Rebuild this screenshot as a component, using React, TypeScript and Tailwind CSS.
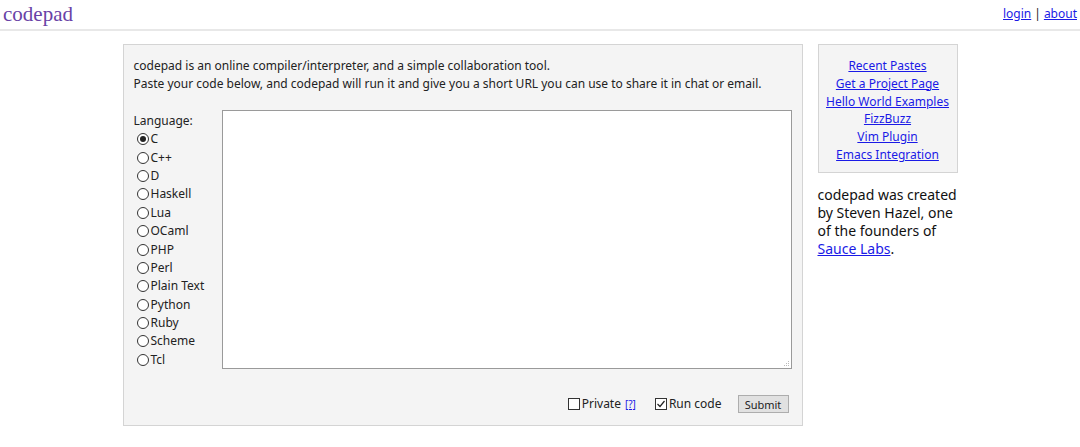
import React, { useState } from 'react';

const languages = [
  'C',
  'C++',
  'D',
  'Haskell',
  'Lua',
  'OCaml',
  'PHP',
  'Perl',
  'Plain Text',
  'Python',
  'Ruby',
  'Scheme',
  'Tcl',
];

const sideLinks = [
  'Recent Pastes',
  'Get a Project Page',
  'Hello World Examples',
  'FizzBuzz',
  'Vim Plugin',
  'Emacs Integration',
];

const Radio: React.FC<{ checked: boolean }> = ({ checked }) => (
  <span className="inline-flex items-center justify-center w-[12px] h-[12px] rounded-full border border-[#333] bg-white mr-[2px] shrink-0">
    {checked && <span className="w-[6px] h-[6px] rounded-full bg-[#222]" />}
  </span>
);

const Check: React.FC<{ checked: boolean }> = ({ checked }) => (
  <span className="inline-flex items-center justify-center w-[12px] h-[12px] border border-[#333] bg-white mr-[2px] shrink-0">
    {checked && (
      <svg width="10" height="10" viewBox="0 0 10 10">
        <path d="M1.5 5 L4 7.5 L8.5 2" fill="none" stroke="#222" strokeWidth="1.2" />
      </svg>
    )}
  </span>
);

const App: React.FC = () => {
  const [lang, setLang] = useState('C');
  const [isPrivate, setIsPrivate] = useState(false);
  const [runCode, setRunCode] = useState(true);

  return (
    <div className="min-h-screen bg-white text-[#222] font-['Noto_Sans',sans-serif]">
      <header className="flex items-start justify-between h-[31px] border-b-2 border-[#e8e8e8] px-[3px]">
        <span className="font-['Liberation_Serif',serif] text-[21px] leading-[29px] text-[#6942a6]">codepad</span>
        <div className="text-[12px] leading-[27px] pr-0 whitespace-nowrap">
          <a href="#" className="text-[#1a1ae6] underline">login</a>
          <span className="mx-[3px]">|</span>
          <a href="#" className="text-[#1a1ae6] underline">about</a>
        </div>
      </header>

      <div className="flex justify-center gap-[15px] mt-[13px]">
        <div className="w-[680px] bg-[#f4f4f4] border border-[#d4d4d4] pt-[12px] px-[10px] pb-[12px]">
          <p className="text-[12px] leading-[18px]">codepad is an online compiler/interpreter, and a simple collaboration tool.</p>
          <p className="text-[12px] leading-[18px]">Paste your code below, and codepad will run it and give you a short URL you can use to share it in chat or email.</p>

          <div className="flex mt-[17px]">
            <div className="w-[88px] shrink-0 text-[12px]">
              <div className="leading-[18px] mt-[2px]">Language:</div>
              {languages.map((l) => (
                <label key={l} className="flex items-center h-[18.4px] pl-[3px] cursor-pointer" onClick={() => setLang(l)}>
                  <Radio checked={lang === l} />
                  <span>{l}</span>
                </label>
              ))}
            </div>
            <div className="relative">
              <textarea className="block w-[570px] h-[259px] bg-white border border-[#9a9a9a] resize-none outline-none" />
              <svg className="absolute right-[2px] bottom-[2px]" width="7" height="7" viewBox="0 0 7 7">
                <rect x="5" y="1" width="1" height="1" fill="#bbb" />
                <rect x="3" y="3" width="1" height="1" fill="#bbb" />
                <rect x="5" y="3" width="1" height="1" fill="#bbb" />
                <rect x="1" y="5" width="1" height="1" fill="#bbb" />
                <rect x="3" y="5" width="1" height="1" fill="#bbb" />
                <rect x="5" y="5" width="1" height="1" fill="#bbb" />
              </svg>
            </div>
          </div>

          <div className="flex items-center justify-end mt-[26px] text-[12px] pr-[3px]">
            <label className="flex items-center cursor-pointer" onClick={() => setIsPrivate(!isPrivate)}>
              <Check checked={isPrivate} />
              <span>Private</span>
            </label>
            <a href="#" className="ml-[4px] text-[#1a1ae6] underline text-[10px]">[?]</a>
            <label className="flex items-center ml-[19px] cursor-pointer" onClick={() => setRunCode(!runCode)}>
              <Check checked={runCode} />
              <span>Run code</span>
            </label>
            <button className="ml-[16px] w-[51px] h-[18px] bg-[#e1e1e1] border border-[#adadad] text-[11px] leading-none">Submit</button>
          </div>
        </div>

        <div className="w-[140px]">
          <div className="bg-[#f4f4f4] border border-[#d4d4d4] pt-[12px] pb-[8px] text-center text-[12px]">
            {sideLinks.map((s) => (
              <div key={s} className="leading-[17.8px]">
                <a href="#" className="text-[#1a1ae6] underline">{s}</a>
              </div>
            ))}
          </div>
          <p className="mt-[13px] text-[14px] leading-[18px] text-[#111] whitespace-nowrap">
            codepad was created
            <br />
            by Steven Hazel, one
            <br />
            of the founders of
            <br />
            <a href="#" className="text-[#1a1ae6] underline">Sauce Labs</a>.
          </p>
        </div>
      </div>
    </div>
  );
};

export default App;
